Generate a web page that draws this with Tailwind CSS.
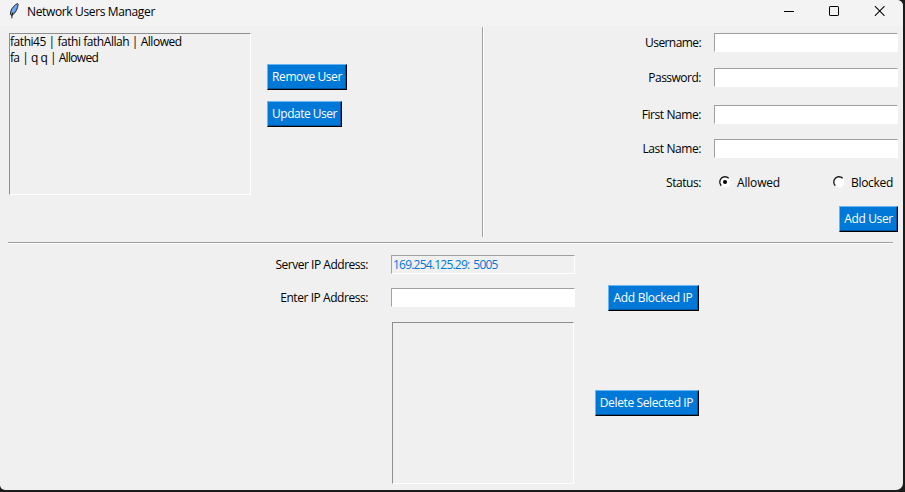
<!DOCTYPE html>
<html lang="en">
<head>
<meta charset="utf-8">
<title>Network Users Manager</title>
<script src="https://cdn.jsdelivr.net/npm/@tailwindcss/browser@4"></script>
</head>
<body class="w-[905px] h-[492px] overflow-hidden bg-[#1b1b1b] font-['Open_Sans','Noto_Sans',sans-serif] text-[12px] leading-4 tracking-[-0.36px] text-black whitespace-nowrap">
<div class="w-[903px] h-[490px] overflow-hidden rounded-tr-[6px] rounded-br-[7px] rounded-bl-[5px] bg-[#f0f0f0] flex flex-col">
  <header class="h-[27px] shrink-0 bg-[#f3f3f3] flex items-start">
    <svg class="ml-[9px] mt-[3px] shrink-0" width="10" height="16" viewBox="0 0 10 16">
      <path d="M8.600.6C6.300 1.200 3.200 4.300 1.700 8.200L1.400 11.600 3 12.400C6.300 10.300 8.800 6 9.200 1.200Z" fill="#5c9be6" stroke="#222" stroke-width=".9"/>
      <path d="M7.500 2.500C5.200 5 3.600 8.300 3 11" fill="none" stroke="#8fc0f7" stroke-width="1"/>
      <path d="M3.600 9.500C3.100 11.500 2.900 13 2.800 15.300" fill="none" stroke="#111" stroke-width="1"/>
    </svg>
    <h1 class="ml-[8px] mt-[4px]">Network Users Manager</h1>
    <div class="ml-auto mr-[18px] mt-[6px] flex gap-[35px]">
      <svg width="10" height="10" viewBox="0 0 10 10"><path d="M0 5.500H10" stroke="#000"/></svg>
      <svg width="10" height="10" viewBox="0 0 10 10"><rect x=".5" y=".5" width="9" height="9" rx=".6" fill="none" stroke="#000"/></svg>
      <svg width="11" height="10" viewBox="0 0 11 10"><path d="M.9.2L10.500 9.800M10.500.2L.9 9.800" stroke="#000" stroke-width="1.100"/></svg>
    </div>
  </header>

  <section class="h-[215px] shrink-0 flex items-start">
    <div class="ml-[9px] mt-[6px] w-[242px] h-[162px] border border-t-[#8e8e8e] border-l-[#8e8e8e] border-r-white border-b-white tracking-[-0.45px]">
      <div>fathi45 | fathi fathAllah | Allowed</div>
      <div class="tracking-[-0.68px] [word-spacing:0.4px]">fa | q q | Allowed</div>
    </div>
    <div class="ml-[16px] mt-[37px] w-[80px] flex flex-col items-start gap-[11px]">
      <button class="w-[80px] h-[26px] flex items-center justify-center bg-[#0078d7] text-white border border-t-[#69b4f5] border-l-[#69b4f5] border-r-black border-b-black shadow-[inset_-1px_-1px_0_#0053a0] tracking-[-0.42px]">Remove User</button>
      <button class="w-[75px] h-[26px] flex items-center justify-center bg-[#0078d7] text-white border border-t-[#69b4f5] border-l-[#69b4f5] border-r-black border-b-black shadow-[inset_-1px_-1px_0_#0053a0] tracking-[-0.5px]">Update User</button>
    </div>
    <div class="ml-[135px] w-[2px] h-[210px] border-l border-l-[#a0a0a0] border-r border-r-white"></div>
    <form class="ml-auto mr-[5px] mt-[6px] w-[414px] flex flex-col">
      <label class="flex h-[19px] items-center justify-end gap-[13px]"><span class="tracking-[-0.58px]">Username:</span><input class="w-[184px] h-[19px] bg-white border border-t-[#a0a0a0] border-l-[#a0a0a0] border-r-white border-b-white"></label>
      <label class="mt-[16px] flex h-[19px] items-center justify-end gap-[13px]"><span class="tracking-[-0.5px]">Password:</span><input class="w-[184px] h-[19px] bg-white border border-t-[#a0a0a0] border-l-[#a0a0a0] border-r-white border-b-white"></label>
      <label class="mt-[18px] flex h-[19px] items-center justify-end gap-[13px]"><span class="tracking-[-0.42px]">First Name:</span><input class="w-[184px] h-[19px] bg-white border border-t-[#a0a0a0] border-l-[#a0a0a0] border-r-white border-b-white"></label>
      <label class="mt-[15px] flex h-[19px] items-center justify-end gap-[13px]"><span class="tracking-[-0.42px]">Last Name:</span><input class="w-[184px] h-[19px] bg-white border border-t-[#a0a0a0] border-l-[#a0a0a0] border-r-white border-b-white"></label>
      <div class="mt-[15px] flex h-[19px] items-center justify-end gap-[13px]">
        <span class="tracking-[-0.45px]">Status:</span>
        <div class="w-[184px] pl-[5px] pr-[5px] flex items-center justify-between">
          <label class="flex items-center gap-[6px]">
            <svg class="-mt-[2px]" width="12" height="12" viewBox="0 0 12 12"><circle cx="6" cy="6" r="5.500" fill="#fff"/><path d="M2.300 9.700A5.200 5.200 0 0 1 9.700 2.300" fill="none" stroke="#111" stroke-width="1.300"/><circle cx="6" cy="6" r="2" fill="#000"/></svg>
            <span class="tracking-[-0.18px]">Allowed</span>
          </label>
          <label class="flex items-center gap-[6px]">
            <svg class="-mt-[2px]" width="12" height="12" viewBox="0 0 12 12"><circle cx="6" cy="6" r="5.500" fill="#fff"/><path d="M2.300 9.700A5.200 5.200 0 0 1 9.700 2.300" fill="none" stroke="#111" stroke-width="1.300"/></svg>
            <span class="tracking-[-0.3px]">Blocked</span>
          </label>
        </div>
      </div>
      <button type="button" class="mt-[14px] self-end w-[59px] h-[26px] flex items-center justify-center bg-[#0078d7] text-white border border-t-[#69b4f5] border-l-[#69b4f5] border-r-black border-b-black shadow-[inset_-1px_-1px_0_#0053a0]">Add User</button>
    </form>
  </section>

  <div class="ml-[8px] w-[885px] h-[2px] shrink-0 border-t border-t-[#a0a0a0] border-b border-b-white"></div>

  <section class="flex items-start">
    <div class="w-[368px] mt-[11px] flex flex-col items-end gap-[14px]">
      <div class="h-[19px] flex items-center tracking-[-0.48px]">Server IP Address:</div>
      <div class="h-[19px] flex items-center tracking-[-0.44px]">Enter IP Address:</div>
    </div>
    <div class="ml-[23px] mt-[11px] w-[184px] flex flex-col">
      <div class="h-[19px] pl-[1px] flex items-center text-[#0078d7] tracking-[-0.78px] [word-spacing:1.6px] border border-t-[#a0a0a0] border-l-[#a0a0a0] border-r-white border-b-white">169.254.125.29: 5005</div>
      <input class="mt-[14px] h-[19px] bg-white border border-t-[#a0a0a0] border-l-[#a0a0a0] border-r-white border-b-white">
      <div class="mt-[15px] ml-[1px] w-[182px] h-[162px] border border-t-[#8e8e8e] border-l-[#8e8e8e] border-r-white border-b-white"></div>
    </div>
    <div class="w-[124px] mt-[41px] flex flex-col items-end gap-[79px]">
      <button class="w-[91px] h-[26px] flex items-center justify-center bg-[#0078d7] text-white border border-t-[#69b4f5] border-l-[#69b4f5] border-r-black border-b-black shadow-[inset_-1px_-1px_0_#0053a0] tracking-[-0.3px] pr-[1px]">Add Blocked IP</button>
      <button class="w-[104px] h-[26px] flex items-center justify-center bg-[#0078d7] text-white border border-t-[#69b4f5] border-l-[#69b4f5] border-r-black border-b-black shadow-[inset_-1px_-1px_0_#0053a0] tracking-[-0.38px] pr-[1px]">Delete Selected IP</button>
    </div>
  </section>
</div>
</body>
</html>
